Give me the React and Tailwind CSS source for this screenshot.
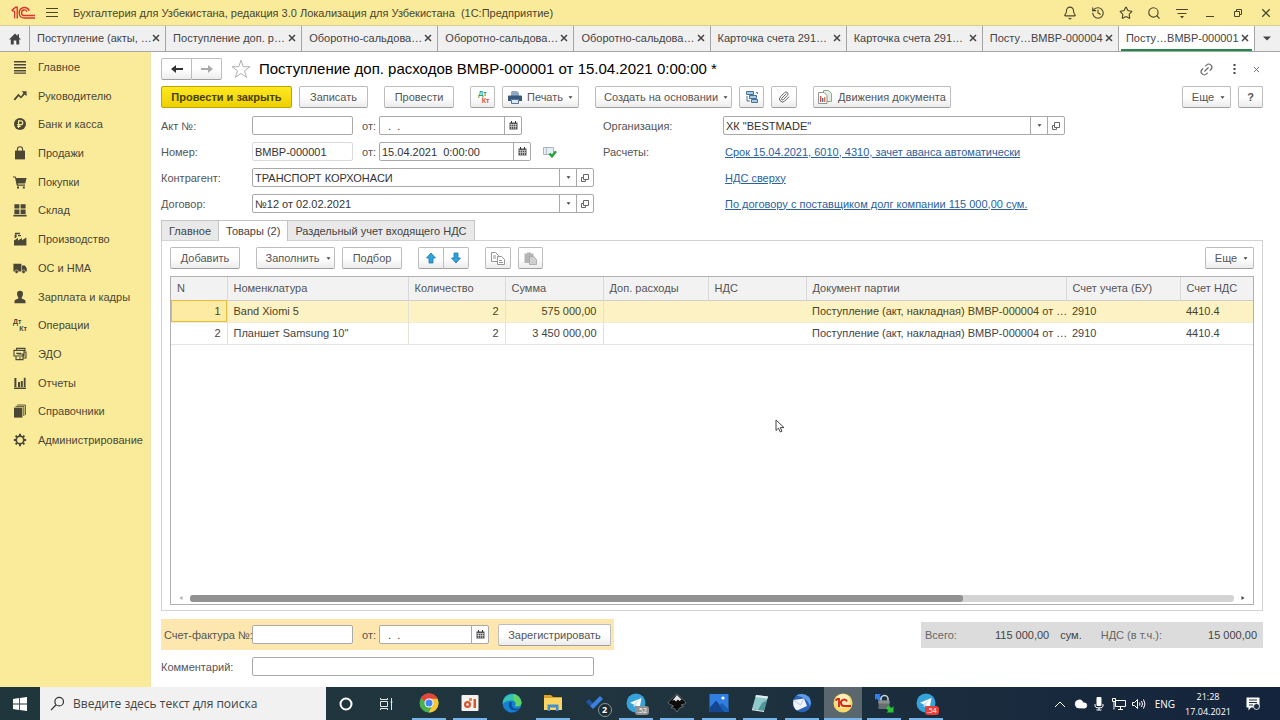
import React from "react";
import { Bell, History, Star, Search, Link2, Paperclip, Cloud } from "lucide-react";

const OneCLogo = ({ className = "w-6 h-[14px]" }) => (
  <svg viewBox="0 0 24 14" className={className} fill="none" stroke="#d8372c" strokeWidth="1.4" aria-hidden="true">
    <path d="M.6 4.600 4.600 1.200H6.200V12.400" />
    <path d="M1.200 5.200H3.600V12.400" strokeWidth="1.200" />
    <path d="M18.200 4.800A5.200 5.200 0 1 0 13.400 12H24" />
    <path d="M15.900 5.600A2.800 2.800 0 1 0 13.600 9.500H24" />
  </svg>
);

const ico = "w-[14px] h-[14px] shrink-0";
const navIcons = {
  list: <path d="M1 1h12v1.600H1zM1 4h12v1.600H1zM1 7h12v1.600H1zM1 10h12v1.600H1zM1 12.600h12v1.200H1z" />,
  trend: <path d="M8.600 2.200H13.600V7.200L11.800 5.500 8 9.600 5.600 7.200 2 11.600 .6 10.300 5.400 4.800 8 7.400 10.400 4z" />,
  ruble: (
    <>
      <circle cx="7" cy="7" r="6" />
      <path d="M5.600 11V3.800h2.200a1.900 1.900 0 0 1 0 3.900H4.200M4.200 9.400h3.600" fill="none" stroke="#faeb9b" strokeWidth="1.2" />
    </>
  ),
  bag: (
    <>
      <path d="M2 4.600h10V13.400H2z" />
      <path d="M4.400 7V3.400a2.600 2.600 0 0 1 5.200 0V7" fill="none" stroke="#4a4736" strokeWidth="1.1" />
    </>
  ),
  cart: <path d="M0 1.400h2.600L3.200 3H13.600L12.200 8.400H4.800L5 9.600H12v1.200H3.800L2 2.600H0zM4 11.400h2v2H4zM9.800 11.400h2v2h-2z" />,
  boxes: <path d="M1.400 1.200h5v4.400h-5zM7.600 1.200h5v4.400h-5zM1.400 6.600h5V11h-5zM7.600 6.600h5V11h-5zM.4 11.800h13.200v1.600H.4z" />,
  factory: <path d="M1 13.400V8.600L5 6v2.400L9 6v2.200L13.400 5.400v8zM1.600 6.600V2.400h2V5.200zM2 .8h5v1.400H2zM5 3h3v1.200H5z" />,
  truck: (
    <>
      <path d="M.4 2.800h8v7.600H.4zM9 4.600h3l1.800 2.800v3H9z" />
      <circle cx="3.600" cy="10.800" r="1.800" stroke="#faeb9b" strokeWidth=".6" />
      <circle cx="10.600" cy="10.800" r="1.800" stroke="#faeb9b" strokeWidth=".6" />
    </>
  ),
  person: <path d="M7 .8a3 3 0 0 1 3 3C10 5.600 9 7.200 8.600 7.600L8.800 8.600 12 10q.6.4.6 3.200H1.400Q1.400 10.400 2 10l3.200-1.400.2-1C5 7.200 4 5.600 4 3.800A3 3 0 0 1 7 .8z" />,
  edo: (
    <g fill="none" stroke="#4a4736" strokeWidth="1.1">
      <path d="M3.600 4V1.400H12V4M1 3.400H11V9H1zM11 5h2v6H9.500M3 9v3.600H10V7H4.400M3 6.200H8M6 11h2" />
    </g>
  ),
  bars: <path d="M1.400 2h2v9h-2zM5 6h2v5H5zM7.800 5h2v6h-2zM10.800 1.800h1.800V11h-1.800zM1 11.600h12V13H1z" />,
  books: (
    <>
      <path d="M1 3.600h8.400v10H1z" />
      <path d="M2.600 2.400H10.800V12M4.200 1H12.400V11" fill="none" stroke="#4a4736" strokeWidth=".9" />
    </>
  ),
  gear: (
    <g fill="none" stroke="#4a4736">
      <circle cx="7" cy="7" r="3.800" strokeWidth="1.700" />
      <path d="M7 .8V3M7 11v2.200M.8 7H3M11 7h2.200M2.600 2.600 4 4M10 10l1.400 1.400M11.400 2.600 10 4M4 10 2.600 11.400" strokeWidth="1.900" />
    </g>
  ),
};

const NAV = [
  ["list", "Главное"],
  ["trend", "Руководителю"],
  ["ruble", "Банк и касса"],
  ["bag", "Продажи"],
  ["cart", "Покупки"],
  ["boxes", "Склад"],
  ["factory", "Производство"],
  ["truck", "ОС и НМА"],
  ["person", "Зарплата и кадры"],
  ["dtkt", "Операции"],
  ["edo", "ЭДО"],
  ["bars", "Отчеты"],
  ["books", "Справочники"],
  ["gear", "Администрирование"],
];

const TABS = [
  "Поступление (акты, …",
  "Поступление доп. р…",
  "Оборотно-сальдова…",
  "Оборотно-сальдова…",
  "Оборотно-сальдова…",
  "Карточка счета 291…",
  "Карточка счета 291…",
  "Посту…BMBP-000004",
  "Посту…BMBP-000001",
];

const DtKt = ({ a = "", b = "" }) => (
  <span className="flex w-[14px] shrink-0 flex-col text-[7px] leading-[7px] font-bold" aria-hidden="true">
    <span className={a}>Дт</span>
    <span className={`self-end ${b}`}>Кт</span>
  </span>
);

const CrossIcon = ({ className }) => (
  <svg viewBox="0 0 8 8" className={className} fill="none" stroke="currentColor" aria-hidden="true">
    <path d="m1 1 6 6M7 1 1 7" />
  </svg>
);

const Caret = () => (
  <svg viewBox="0 0 5 3" className="h-[3px] w-[5px] shrink-0" fill="#444" aria-hidden="true">
    <path d="M.5 .3h4L2.500 2.800z" />
  </svg>
);

const Btn = ({ children, className = "", ...rest }) => (
  <button
    type="button"
    className={`flex h-[22px] shrink-0 items-center justify-center rounded-[2px] border border-[#bdbdbd] border-b-[#9f9f9f] bg-linear-to-b from-white from-50% to-[#ececec] whitespace-nowrap text-[#555] ${className}`}
    {...rest}
  >
    {children}
  </button>
);

const CalendarIcon = () => (
  <svg viewBox="0 0 9 9" className="h-[9px] w-[9px]" aria-hidden="true">
    <path d="M.5 1.500h8v7h-8z" fill="#555" />
    <path d="M2.500 0v2M6.500 0v2" stroke="#333" />
    <path d="M1 3.500h7M1 5.500h7M2.500 3v5M4.500 3v5M6.500 3v5" stroke="#ddd" strokeWidth=".6" />
  </svg>
);

const OpenIcon = () => (
  <svg viewBox="0 0 10 10" className="h-[10px] w-[10px]" fill="none" stroke="#666" aria-hidden="true">
    <path d="M3.500 1.500h5v5h-5zM3.500 4.500h-2v4h4v-2" />
  </svg>
);

const fieldBox = "flex h-[19px] shrink-0 overflow-hidden rounded-[2px] border border-[#a9a9a9] bg-white";
const inputCls = "h-full w-full min-w-0 flex-1 bg-transparent px-[2px] text-[#333] outline-none";
const sideBtn = "flex h-full w-[17px] shrink-0 items-center justify-center border-l border-[#a9a9a9]";

const Combo = ({ id, value }) => (
  <div className={`${fieldBox} w-[342px]`}>
    <input id={id} defaultValue={value} className={inputCls} />
    <button type="button" aria-label="Выбрать" className={sideBtn}><Caret /></button>
    <button type="button" aria-label="Открыть" className={sideBtn}><OpenIcon /></button>
  </div>
);

const DateField = ({ id, value, width }) => (
  <div className={`${fieldBox} ${width}`}>
    <input id={id} defaultValue={value} className={`${inputCls} whitespace-pre`} />
    <button type="button" aria-label="Календарь" className={sideBtn}><CalendarIcon /></button>
  </div>
);

const Arrow = ({ color, className = "" }) => (
  <svg viewBox="0 0 14 10" className={`h-[10px] w-[14px] ${className}`} fill={color} aria-hidden="true">
    <path d="M1 5 6 1v3h7v2H6v3z" />
  </svg>
);

const FatArrow = ({ className = "" }) => (
  <svg viewBox="0 0 12 12" className={`h-[12px] w-[12px] ${className}`} aria-hidden="true">
    <path d="M6 1 10.500 6H8v5H4V6H1.500z" fill="#2ea3dc" stroke="#1b76ad" strokeWidth=".8" />
  </svg>
);

const COLS = [
  ["N", "w-[56px]"],
  ["Номенклатура", "w-[181px]"],
  ["Количество", "w-[97px]"],
  ["Сумма", "w-[98px]"],
  ["Доп. расходы", "w-[105px]"],
  ["НДС", "w-[98px]"],
  ["Документ партии", "w-[260px]"],
  ["Счет учета (БУ)", "w-[114px]"],
  ["Счет НДС", ""],
];
const ROWS = [
  ["1", "Band Xiomi 5", "2", "575 000,00", "", "", "Поступление (акт, накладная) BMBP-000004 от …", "2910", "4410.4"],
  ["2", "Планшет Samsung 10\"", "2", "3 450 000,00", "", "", "Поступление (акт, накладная) BMBP-000004 от …", "2910", "4410.4"],
];

const TelegramIcon = ({ badge, tone }) => (
  <span className="relative flex">
    <svg viewBox="0 0 20 20" className="h-5 w-5" aria-hidden="true">
      <circle cx="10" cy="10" r="9.500" fill="#35a3da" />
      <path d="M4 9.800 15.500 5 13.600 15 9.800 12.300 8 14 7.600 11.200z" fill="#fff" />
      <path d="M7.600 11.200 13.500 6.800 9.300 11.900 8 14z" fill="#bfd9e8" />
    </svg>
    <span className={`absolute -right-[3px] -bottom-[2px] rounded-[3px] px-[2px] text-[7px] leading-[9px] text-white ${tone}`}>{badge}</span>
  </span>
);

const svg20 = "h-5 w-5";
const TASKS = [
  {
    name: "Chrome", run: true,
    icon: (
      <svg viewBox="0 0 20 20" className={svg20}>
        <circle cx="10" cy="10" r="9.500" fill="#4caf50" />
        <path d="M10 10 1.800 5.200A9.500 9.500 0 0 1 18.500 5.700H10z" fill="#e5453a" />
        <path d="M10 .5a9.500 9.500 0 0 1 8.500 5.200H10L6 8 1.800 5.200A9.500 9.500 0 0 1 10 .5z" fill="#e5453a" />
        <path d="M18.500 5.700A9.500 9.500 0 0 1 9.600 19.500L13.800 12 14 8 10 5.700z" fill="#fbc62f" />
        <circle cx="10" cy="10" r="4.500" fill="#fff" />
        <circle cx="10" cy="10" r="3.500" fill="#4285f4" />
      </svg>
    ),
  },
  {
    name: "Запись экрана", run: true,
    icon: (
      <svg viewBox="0 0 20 20" className={svg20}>
        <rect x="1.500" y="2" width="17" height="16" rx="1" fill="#f5f1ee" />
        <circle cx="7.500" cy="11.500" r="3.500" fill="#d9562f" />
        <circle cx="7.500" cy="11.500" r="1.200" fill="#fff" />
        <path d="M9 5h3v3H9z" fill="#e8894a" />
        <path d="M13.500 6h2.500v9h-2.500z" fill="#d9562f" />
      </svg>
    ),
  },
  {
    name: "Edge", run: false,
    icon: (
      <svg viewBox="0 0 20 20" className={svg20}>
        <circle cx="10" cy="10" r="9.500" fill="#1681d2" />
        <path d="M1 8A9.500 9.500 0 0 1 19.500 9.500C19.500 13 16 14 13 13c1.500-1.500 1-5-2.500-5.500C6 7 2.500 9 .6 11z" fill="#37c3b0" />
        <path d="M11 1A9.500 9.500 0 0 1 19.500 9.500C19.500 13 16 14 13 13c1.500-1.500 1-4-1-5z" fill="#62d467" />
        <path d="M7.500 9C5.500 13 8 18 13.500 17.500 15.500 17.300 17 16 17.800 15 15.500 16.500 10 16 9.600 11.500 9.600 10.500 10 9.600 10.500 9z" fill="#0d4f9e" />
      </svg>
    ),
  },
  {
    name: "Проводник", run: true,
    icon: (
      <svg viewBox="0 0 20 20" className={svg20}>
        <path d="M1 2h7l2 2h9v3H1z" fill="#dd9f26" />
        <path d="M1 5h18v12H1z" fill="#fcd462" />
        <path d="M4.500 18v-6.500h11V18H13v-3.500H7V18z" fill="#3f8fce" />
      </svg>
    ),
  },
  {
    name: "To Do", run: false,
    icon: (
      <span className="relative flex">
        <svg viewBox="0 0 20 20" className={svg20}>
          <path d="m1 9 3-3 4 4-3 3z" fill="#2153a8" />
          <path d="M5 13 15 3l3 3L8 16z" fill="#3a80e0" />
        </svg>
        <span className="absolute -right-[7px] -bottom-[4px] flex h-[14px] w-[14px] items-center justify-center rounded-full border border-[#8b979c] bg-[#1b2c34] text-[9px] leading-none font-bold text-white">2</span>
      </span>
    ),
  },
  { name: "Telegram", run: true, icon: <TelegramIcon badge=".52" tone="bg-[#8b9296]" /> },
  {
    name: "Inkscape", run: true,
    icon: (
      <svg viewBox="0 0 20 20" className={svg20}>
        <path d="M10 .8 18.500 9q1 1.500-1 2l-3.500 1 2.500 1.500-4 1.500L10 19l-2.500-3.500-3.500-1L6.500 13 2.500 11q-2-.5-1-2z" fill="#0c0c0c" stroke="#8e979b" strokeWidth=".6" />
        <path d="M10 2 14.500 6.500 12.500 8 11 6.500 9 8.500 7.500 7 5.500 7.500z" fill="#e4e4e4" />
      </svg>
    ),
  },
  {
    name: "Фотографии", run: true,
    icon: (
      <svg viewBox="0 0 20 20" className={svg20}>
        <path d="M.5 1h19v18H.5z" fill="#2f7fe0" />
        <path d="M.5 15 7 7.500 16.500 19H.5z" fill="#14478f" />
        <path d="M10 12.500 13 10l6.500 6v3h-4z" fill="#1c5fb8" />
        <circle cx="14" cy="5" r="1.600" fill="#fff" />
      </svg>
    ),
  },
  {
    name: "Блокнот", run: true,
    icon: (
      <svg viewBox="0 0 20 20" className={svg20}>
        <path d="M6 2 18 3.500 14 18 2 16z" fill="#8fc9cc" />
        <path d="M6 2 18 3.500 17.500 5.500 5.500 4z" fill="#e8eef0" />
        <path d="m12 10 5-3-3 11-6-1z" fill="#4f969c" />
        <path d="M2 16 14 18v1L2 17.200z" fill="#eee" />
      </svg>
    ),
  },
  {
    name: "Thunderbird", run: true,
    icon: (
      <svg viewBox="0 0 20 20" className={svg20}>
        <circle cx="10" cy="10" r="9.200" fill="#2a62b8" />
        <path d="M4 2.500Q11-1 17 4q3 5 1 9Q15 4 4 2.500z" fill="#5f9be6" />
        <path d="M1.500 7 12 5.500 15 13 5 17.500Q0 14 1.500 7z" fill="#f0f4fa" />
        <path d="m1.500 7 7 5L12 5.500" fill="none" stroke="#a9bbd2" strokeWidth=".8" />
      </svg>
    ),
  },
  {
    name: "1С:Предприятие", run: true, active: true,
    icon: (
      <svg viewBox="0 0 20 20" className={svg20}>
        <circle cx="10" cy="10" r="9.500" fill="#fbd96b" />
        <circle cx="10" cy="8" r="7" fill="#fdf0b4" />
        <path d="M2.500 7.500 4.500 6h1.500v8M14 8.500A3.200 3.200 0 1 0 11.500 13H18" fill="none" stroke="#d8281e" strokeWidth="1.900" />
      </svg>
    ),
  },
  {
    name: "Удаленный доступ", run: true,
    icon: (
      <svg viewBox="0 0 20 20" className={svg20}>
        <path d="M1 1h6L5.500 2.500 8 5 5 8 2.500 5.500 1 7z" fill="#2f7ff0" />
        <path d="M7 8V6a3.500 3.500 0 0 1 7 0v2" fill="none" stroke="#c9ccce" strokeWidth="1.600" />
        <path d="M4.500 7.500h11V16h-11z" fill="#686d70" />
        <path d="M4.500 7.500h11v3h-11z" fill="#8b9093" />
        <path d="M19.500 19.500h-7l1.800-1.800L12 15l2.500-2.500L17.500 15l2-2z" fill="#2bc434" />
      </svg>
    ),
  },
  { name: "Telegram 2", run: true, icon: <TelegramIcon badge=".54" tone="bg-[#e53f3c]" /> },
];

function TitleBar() {
  const b = "flex h-full w-7 items-center justify-center text-[#4a452c]";
  return (
    <header className="flex h-[25px] shrink-0 items-center bg-[#faeb9b] pl-[11px] text-[#4a452c]">
      <OneCLogo />
      <button type="button" aria-label="Меню" className="ml-[11px] flex h-full w-3 items-center">
        <svg viewBox="0 0 12 11" className="h-[11px] w-3" stroke="currentColor"><path d="M0 1.500h12M0 5.500h12M0 9.500h12" /></svg>
      </button>
      <h1 className="ml-[15px] flex-1 truncate whitespace-pre">Бухгалтерия для Узбекистана, редакция 3.0 Локализация для Узбекистана  (1С:Предприятие)</h1>
      <div className="flex h-full shrink-0">
        <button type="button" aria-label="Уведомления" className={b}><Bell size={14} strokeWidth={1.9} /></button>
        <button type="button" aria-label="История" className={b}><History size={14} strokeWidth={1.9} /></button>
        <button type="button" aria-label="Избранное" className={b}><Star size={14} strokeWidth={1.9} /></button>
        <button type="button" aria-label="Поиск" className={b}><Search size={14} strokeWidth={1.9} /></button>
        <button type="button" aria-label="Настройки" className={b}>
          <svg viewBox="0 0 12 12" className="h-3 w-3" stroke="currentColor" fill="currentColor"><path d="M0 2.500h12M1.500 6.500h9" /><path d="M4 9h4L6 11.500z" stroke="none" /></svg>
        </button>
        <button type="button" aria-label="Свернуть" className={b}>
          <svg viewBox="0 0 8 8" className="h-2 w-2" stroke="currentColor"><path d="M0 7.500h8" /></svg>
        </button>
        <button type="button" aria-label="Развернуть" className={b}>
          <svg viewBox="0 0 8 8" className="h-2 w-2" stroke="currentColor" fill="none"><path d="M.5 2.500h5v5h-5zM2.500 2.500v-2h5v5h-2" /></svg>
        </button>
        <button type="button" aria-label="Закрыть" className={b}><CrossIcon className="h-[10px] w-[10px]" /></button>
      </div>
    </header>
  );
}

function TabBar() {
  return (
    <nav className="flex h-[27px] shrink-0 border-y border-t-[#d9cf95] border-b-[#a5a5a5] bg-[#f0f0f0] text-[#444]">
      <button type="button" aria-label="Начальная страница" className="flex w-[30px] shrink-0 items-center justify-center border-r border-[#a5a5a5]">
        <svg viewBox="0 0 12 12" className="h-3 w-3" fill="#444"><path d="M6 .5 0 6.500h1.800V11.500H4.700V7.500h2.600v4h2.900V6.500H12L10 4.500V1.200H8.500V3z" /></svg>
      </button>
      {TABS.map((t, i) => {
        const on = i === TABS.length - 1;
        return (
          <div key={i} className={`flex min-w-0 flex-1 border-r border-[#a5a5a5] px-[2px] ${on ? "bg-white" : ""}`}>
            <div className={`flex min-w-0 flex-1 items-center justify-between border-b-2 pr-[3px] pl-[5px] ${on ? "border-[#25884c]" : "border-transparent"}`}>
              <a href="#tab" className="whitespace-nowrap">{t}</a>
              <button type="button" aria-label="Закрыть вкладку" className="flex h-4 w-2 shrink-0 items-center justify-center">
                <CrossIcon className="h-2 w-2 stroke-[1.5]" />
              </button>
            </div>
          </div>
        );
      })}
      <button type="button" aria-label="Все вкладки" className="flex w-[25px] shrink-0 items-center justify-center">
        <svg viewBox="0 0 8 5" className="h-[5px] w-2" fill="#444"><path d="M0 .5h8L4 4.500z" /></svg>
      </button>
    </nav>
  );
}

function Sidebar() {
  return (
    <aside className="w-[151px] shrink-0 border-r border-[#eee3a8] bg-[#faeb9b] pt-[5px]">
      <ul className="flex h-[393px] flex-col justify-between">
        {NAV.map(([icon, label]) => (
          <li key={label}>
            <a href="#section" className="flex h-5 items-center gap-[11px] pl-[13px] text-[#4a4736]">
              {icon === "dtkt" ? <DtKt /> : <svg viewBox="0 0 14 14" className={ico} fill="#4a4736" aria-hidden="true">{navIcons[icon]}</svg>}
              {label}
            </a>
          </li>
        ))}
      </ul>
    </aside>
  );
}

function CommandBar() {
  return (
    <div className="flex items-center gap-4">
      <div className="flex gap-[7px]">
        <button type="button" className="h-[22px] w-[131px] shrink-0 rounded-[2px] border border-[#c0a200] bg-linear-to-b from-[#ffe81f] to-[#edd000] font-bold whitespace-nowrap text-[#4a4000]">Провести и закрыть</button>
        <Btn className="w-[69px]">Записать</Btn>
      </div>
      <Btn className="w-[70px]">Провести</Btn>
      <div className="flex gap-[7px]">
        <Btn className="w-[25px]" aria-label="Проводки"><DtKt a="text-[#2f9e63]" b="text-[#d9503f]" /></Btn>
        <Btn className="w-[77px] gap-[5px]">
          <svg viewBox="0 0 14 13" className="h-[13px] w-[14px]"><path d="M4 0h5l2 2v3H3V1z" fill="#8fa9c6" /><path d="M1 4.500h12q1 0 1 1V10h-3V8H3v2H0V5.500q0-1 1-1z" fill="#38587c" /><path d="M3.500 8.500h7v4h-7z" fill="#dfe9f3" stroke="#38587c" strokeWidth=".8" /></svg>
          <span>Печать</span><Caret />
        </Btn>
      </div>
      <div className="flex gap-[7px]">
        <Btn className="w-[137px] gap-[5px] pl-[5px]"><span>Создать на основании</span><Caret /></Btn>
        <Btn className="w-[25px]" aria-label="Структура подчиненности">
          <svg viewBox="0 0 14 14" className="h-[14px] w-[14px]" fill="#a9cbe6" stroke="#35658f" strokeWidth=".9"><path d="M1.500 1.500h7v3h-7zM4.500 5.500h7v3h-7zM6.500 9.500h6v3h-6z" /><path d="M2 6v5h3M11 2.500h1.500V4" fill="none" /></svg>
        </Btn>
        <Btn className="w-[26px]" aria-label="Файлы"><Paperclip size={12} strokeWidth={1.8} /></Btn>
      </div>
      <Btn className="w-[138px] gap-[6px]">
        <svg viewBox="0 0 14 14" className="h-[14px] w-[14px]"><path d="M5.500.5h5l3 3v8h-8z" fill="#e4efe4" stroke="#6d9a70" strokeWidth=".8" /><path d="M.5 2.500H6l3 3v8H.5z" fill="#fff" stroke="#777" strokeWidth=".8" /><path d="M2 6h1.400v6H2z" fill="#d9503f" /><path d="M4 8h1.400v4H4z" fill="#3f76ad" /><path d="M6 7h1.400v5H6z" fill="#dc7a35" /></svg>
        <span>Движения документа</span>
      </Btn>
      <div className="ml-auto flex gap-[7px]">
        <Btn className="w-[49px] gap-[6px] pl-1"><span>Еще</span><Caret /></Btn>
        <Btn className="w-[25px] font-bold text-[#222]">?</Btn>
      </div>
    </div>
  );
}

const plain = "h-[19px] w-[101px] shrink-0 rounded-[2px] border bg-white px-[2px] text-[#333] outline-none";

function Form() {
  const lab = "w-[91px] shrink-0 text-[#555]";
  const link = "ml-[2px] text-[#2c5f9e] underline underline-offset-1";
  return (
    <div className="mt-2 flex gap-[9px]">
      <div className="flex w-[433px] shrink-0 flex-col gap-[7px]">
        <div className="flex items-center">
          <label htmlFor="act" className={lab}>Акт №:</label>
          <input id="act" className={`${plain} border-[#a9a9a9]`} />
          <label htmlFor="actDate" className="ml-[9px] w-[17px] text-[#555]">от:</label>
          <DateField id="actDate" value="  .  ." width="w-[143px]" />
        </div>
        <div className="flex items-center">
          <label htmlFor="num" className={lab}>Номер:</label>
          <input id="num" defaultValue="BMBP-000001" className={`${plain} border-[#d9d9d9]`} />
          <label htmlFor="numDate" className="ml-[9px] w-[17px] text-[#555]">от:</label>
          <DateField id="numDate" value="15.04.2021  0:00:00" width="w-[152px]" />
          <svg viewBox="0 0 14 12" className="ml-3 h-3 w-[14px]" aria-hidden="true"><path d="M.5 1.500h10v7H.5z" fill="#e6eef5" stroke="#a9b4bd" /><path d="M3.500 2v6" stroke="#a9b4bd" strokeWidth=".8" /><path d="m6.500 7.500 2.500 2.800 4-5" fill="none" stroke="#27a13a" strokeWidth="2.400" /></svg>
        </div>
        <div className="flex items-center">
          <label htmlFor="contr" className={lab}>Контрагент:</label>
          <Combo id="contr" value="ТРАНСПОРТ КОРХОНАСИ" />
        </div>
        <div className="flex items-center">
          <label htmlFor="dog" className={lab}>Договор:</label>
          <Combo id="dog" value="№12 от 02.02.2021" />
        </div>
      </div>
      <div className="grid auto-rows-[19px] grid-cols-[120px_auto] items-center gap-y-[7px] whitespace-nowrap">
        <label htmlFor="org" className="text-[#555]">Организация:</label>
        <Combo id="org" value={'ХК "BESTMADE"'} />
        <span className="text-[#555]">Расчеты:</span>
        <a href="#terms" className={link}>Срок 15.04.2021, 6010, 4310, зачет аванса автоматически</a>
        <a href="#vat" className={`${link} col-start-2`}>НДС сверху</a>
        <a href="#debt" className={`${link} col-start-2`}>По договору с поставщиком долг компании 115 000,00 сум.</a>
      </div>
    </div>
  );
}

function GoodsTable() {
  return (
    <div className="mt-[7px] flex min-h-0 flex-1 flex-col overflow-hidden border border-[#b0b0b0]">
      <table className="w-full table-fixed border-collapse">
        <thead>
          <tr className="h-[23px] border-b border-[#cfcfcf] bg-[#f2f2f2] text-[#555]">
            {COLS.map(([c, w]) => (
              <th key={c} className={`${w} border-r border-[#d9d9d9] px-[6px] text-left font-normal last:border-r-0`}>{c}</th>
            ))}
          </tr>
        </thead>
        <tbody>
          {ROWS.map((r, i) => (
            <tr key={i} className={`h-[22px] border-b ${i === 0 ? "border-[#f3ecd0] bg-[#fdf2c4] text-[#4c4420]" : "border-[#e4e4e4] text-[#444]"}`}>
              {r.map((c, j) => (
                <td
                  key={j}
                  className={`pl-[6px] whitespace-nowrap ${[0, 2, 3].includes(j) ? "pr-[6px] text-right" : ""} ${j < 4 ? "border-r border-[#e6e2d2]" : ""} ${i === 0 && j === 0 ? "bg-[#fdeba3] outline outline-1 -outline-offset-1 outline-[#e3bd3c]" : ""}`}
                >
                  {c}
                </td>
              ))}
            </tr>
          ))}
        </tbody>
      </table>
      <div className="mt-auto flex h-3 items-center gap-[7px] px-2">
        <svg viewBox="0 0 4 4" className="h-1 w-1" fill="#aaa"><path d="M3.500 0v4L.5 2z" /></svg>
        <div className="h-[7px] flex-1 rounded-[3px] bg-[#d4d4d4]">
          <div className="h-full w-[74%] rounded-[3px] bg-[#929292]" />
        </div>
        <svg viewBox="0 0 4 4" className="h-1 w-1" fill="#444"><path d="M.5 0v4l3-2z" /></svg>
      </div>
    </div>
  );
}

function GoodsPanel() {
  const tab = "border border-b-0 border-[#c4c4c4] px-[7px] whitespace-nowrap text-[#444]";
  return (
    <>
      <div className="mt-[7px] flex h-[20px]" role="tablist">
        <button type="button" role="tab" aria-selected="false" className={`${tab} h-[20px] border-r-0 bg-[#e9e9e9]`}>Главное</button>
        <button type="button" role="tab" aria-selected="true" className={`${tab} z-10 h-[21px] bg-white`}>Товары (2)</button>
        <button type="button" role="tab" aria-selected="false" className={`${tab} h-[20px] border-l-0 bg-[#e9e9e9]`}>Раздельный учет входящего НДС</button>
      </div>
      <section className="flex min-h-0 flex-1 flex-col border border-[#d2d2d2] px-2 pt-[6px] pb-[5px]">
        <div className="flex items-center gap-4">
          <Btn className="w-[70px]">Добавить</Btn>
          <div className="flex gap-[7px]">
            <Btn className="w-[79px] gap-[6px] pl-[5px]"><span>Заполнить</span><Caret /></Btn>
            <Btn className="w-[60px]">Подбор</Btn>
          </div>
          <div className="flex">
            <Btn className="w-[26px] rounded-r-none" aria-label="Вверх"><FatArrow /></Btn>
            <Btn className="w-[25px] rounded-l-none border-l-0" aria-label="Вниз"><FatArrow className="rotate-180" /></Btn>
          </div>
          <div className="flex gap-[7px]">
            <Btn className="w-[26px]" aria-label="Копировать">
              <svg viewBox="0 0 14 13" className="h-[13px] w-[14px]" fill="#fff" stroke="#8a8a8a" strokeWidth=".9"><path d="M.5.5h4l3 3v6h-7z" /><path d="M6.500 4.500h4l3 3v5h-7zM8 8.500h3M8 10.500h4M2 4h3M2 6h3" /></svg>
            </Btn>
            <Btn className="w-[25px]" aria-label="Вставить">
              <svg viewBox="0 0 13 13" className="h-[13px] w-[13px]" fill="#b5b5b5"><path d="M.5 1.500h2.500V.5h4v1h2.500V11h-9z" /><path d="M5.500 4.500h4l3 3v5h-7z" fill="#cfcfcf" stroke="#a5a5a5" strokeWidth=".8" /></svg>
            </Btn>
          </div>
          <Btn className="ml-auto w-[49px] gap-[6px] pl-1"><span>Еще</span><Caret /></Btn>
        </div>
        <GoodsTable />
      </section>
    </>
  );
}

function Footer() {
  return (
    <>
      <div className="mt-2 flex items-center justify-between">
        <div className="flex h-[31px] w-[453px] items-center bg-[#fde7ae] pl-[3px]">
          <label htmlFor="inv" className="w-[88px] shrink-0 whitespace-nowrap text-[#555]">Счет-фактура №:</label>
          <input id="inv" className={`${plain} border-[#a9a9a9]`} />
          <label htmlFor="invDate" className="ml-[9px] w-[17px] text-[#555]">от:</label>
          <DateField id="invDate" value="  .  ." width="w-[110px]" />
          <Btn className="ml-[9px] w-[113px]">Зарегистрировать</Btn>
        </div>
        <dl className="flex h-[26px] w-[342px] items-center bg-[#dcdcdc] pr-[6px] pl-1 text-[#444]">
          <dt className="text-[#666]">Всего:</dt>
          <dd className="ml-auto">115 000,00</dd>
          <dd className="ml-[11px]">сум.</dd>
          <dt className="ml-[19px] text-[#666]">НДС (в т.ч.):</dt>
          <dd className="ml-[46px]">15 000,00</dd>
        </dl>
      </div>
      <div className="mt-[7px] mb-[11px] flex items-center">
        <label htmlFor="comment" className="w-[91px] shrink-0 text-[#555]">Комментарий:</label>
        <input id="comment" className="h-[19px] w-[342px] rounded-[2px] border border-[#a9a9a9] bg-white px-[2px] outline-none" />
      </div>
    </>
  );
}

function Taskbar() {
  return (
    <footer className="flex h-[33px] shrink-0 items-center bg-linear-to-r from-[#20363d] via-[#1f343e] to-[#14233c] font-['Open_Sans','Noto_Sans',sans-serif] text-white">
      <button type="button" aria-label="Пуск" className="flex h-full w-10 shrink-0 items-center justify-center">
        <svg viewBox="0 0 14 14" className="h-[14px] w-[14px]" fill="#fff"><path d="M0 2 6 1.100V6.600H0zM6.800 1 14 0v6.600H6.800zM0 7.400h6v5.500L0 12zM6.800 7.400H14V14l-7.200-1z" /></svg>
      </button>
      <label className="flex h-full w-[286px] shrink-0 items-center gap-2 bg-[#f1f1f1] pl-[10px] text-[#333]">
        <svg viewBox="0 0 16 16" className="h-[15px] w-[15px] shrink-0" fill="none" stroke="#333" strokeWidth="1.300"><circle cx="9.800" cy="6" r="4.600" /><path d="M6.500 9.300 1 15" /></svg>
        <input aria-label="Поиск" placeholder="Введите здесь текст для поиска" className="min-w-0 flex-1 bg-transparent text-[12px] outline-none placeholder:text-[#444] placeholder:opacity-100" />
      </label>
      <button type="button" aria-label="Кортана" className="flex h-full w-10 shrink-0 items-center justify-center">
        <svg viewBox="0 0 14 14" className="h-[14px] w-[14px]" fill="none" stroke="#fff" strokeWidth="2"><circle cx="7" cy="7" r="5.500" /></svg>
      </button>
      <button type="button" aria-label="Представление задач" className="flex h-full w-10 shrink-0 items-center justify-center">
        <svg viewBox="0 0 14 14" className="h-[14px] w-[14px]" fill="none" stroke="#e6e6e6"><path d="M1.500 4.500h7v5h-7zM1.500 1v1.500h7V1M1.500 13v-1.500h7V13M12.500 1v12M11.500 5h2" /></svg>
      </button>
      <div className="ml-1 flex h-full w-[535px] shrink-0 justify-between">
        {TASKS.map((t) => (
          <button key={t.name} type="button" aria-label={t.name} className={`flex h-full w-[38px] flex-col items-center ${t.active ? "bg-[#5a676c]" : ""}`}>
            <span className="flex flex-1 items-center">{t.icon}</span>
            <span className={`h-[2px] ${t.active ? "w-full" : "w-[34px]"} ${t.run ? "bg-[#76b5ec]" : ""}`} />
          </button>
        ))}
      </div>
      <div className="ml-auto flex h-full items-center pr-5">
        <svg viewBox="0 0 12 8" className="mr-2 h-2 w-3" fill="none" stroke="#fff"><path d="m1 7 5-5 5 5" /></svg>
        <Cloud size={14} fill="#fff" strokeWidth={1} className="mr-[6px]" />
        <svg viewBox="0 0 10 14" className="mr-[8px] h-[14px] w-[10px]" fill="#fff"><rect x="2.500" y="0" width="5" height="9" rx="1" /><path d="M1 7v2q0 2 4 2t4-2V7M5 10v3M2.500 13h5" fill="none" stroke="#fff" /></svg>
        <svg viewBox="0 0 14 12" className="mr-[6px] h-3 w-[14px]" fill="none" stroke="#fff"><path d="M3.500 2.500h10v6h-10zM6 11.500h5M8.500 8.500v3M.5 .5h3v3h-3zM2 3.500v8" /></svg>
        <svg viewBox="0 0 14 12" className="mr-[9px] h-3 w-[14px]" fill="none" stroke="#fff"><path d="M.5 4.500h2l3-3v9l-3-3h-2zM7.500 4.500q1 1.500 0 3M9.500 3q2 3 0 6M11.500 1.500q3 4.500 0 9" /></svg>
        <span className="mr-[10px] text-[10px]">ENG</span>
        <time className="mr-[15px] flex flex-col items-center text-[9px] leading-[15px]">
          <span>21:28</span>
          <span>17.04.2021</span>
        </time>
        <svg viewBox="0 0 14 14" className="h-[14px] w-[14px]"><path d="M.5.500h13v10H5L2.500 13.500V10.500h-2z" fill="#fff" /><path d="M3 3h8M3 5.500h8M3 8h4" stroke="#1b2c3e" /><circle cx="10.500" cy="9.500" r="3" fill="#1b2c3e" stroke="#fff" strokeWidth=".8" /></svg>
      </div>
    </footer>
  );
}

export default function App() {
  return (
    <div className="flex h-screen flex-col overflow-hidden bg-white font-['Liberation_Sans',Arial,sans-serif] text-[11px] leading-[14px]">
      <TitleBar />
      <TabBar />
      <div className="flex min-h-0 flex-1">
        <Sidebar />
        <main className="flex min-w-0 flex-1 flex-col pr-[17px] pl-[10px]">
          <div className="flex h-[34px] shrink-0 items-center">
            <div className="flex">
              <Btn className="w-[31px] rounded-r-none" aria-label="Назад"><Arrow color="#333" /></Btn>
              <Btn className="w-[30px] rounded-l-none border-l-0" aria-label="Вперед"><Arrow color="#aaa" className="rotate-180" /></Btn>
            </div>
            <button type="button" aria-label="В избранное" className="ml-[9px] text-[#b0b0b0]">
              <svg viewBox="0 0 20 20" className="h-5 w-5" fill="none" stroke="currentColor"><path d="m10 1.200 2.200 6.500H19l-5.500 4.100 2.100 6.600L10 14.400l-5.600 4 2.100-6.600L1 7.700h6.800z" /></svg>
            </button>
            <h2 className="ml-2 flex-1 truncate text-[15px] leading-5 text-black">Поступление доп. расходов BMBP-000001 от 15.04.2021 0:00:00 *</h2>
            <div className="flex items-center text-[#666]">
              <button type="button" aria-label="Ссылка" className="mr-1 flex w-4 justify-center"><Link2 size={15} strokeWidth={1.8} className="-rotate-45" /></button>
              <button type="button" aria-label="Еще" className="mx-1 flex w-6 justify-center">
                <svg viewBox="0 0 3 10" className="h-[10px] w-[3px]" fill="#444"><path d="M.5 0h2v2h-2zM.5 4h2v2h-2zM.5 8h2v2h-2z" /></svg>
              </button>
              <button type="button" aria-label="Закрыть" className="mr-[1px] flex w-3 justify-center"><CrossIcon className="h-[7px] w-[7px]" /></button>
            </div>
          </div>
          <CommandBar />
          <Form />
          <GoodsPanel />
          <Footer />
        </main>
      </div>
      <Taskbar />
      <svg viewBox="0 0 10 14" className="pointer-events-none absolute top-[419px] left-[775px] h-[14px] w-[10px]" fill="#fff" stroke="#444" aria-hidden="true">
        <path d="M1 1v10.500l2.500-2.300 1.800 3.800 1.700-.8L5.300 8.600H9z" />
      </svg>
    </div>
  );
}
